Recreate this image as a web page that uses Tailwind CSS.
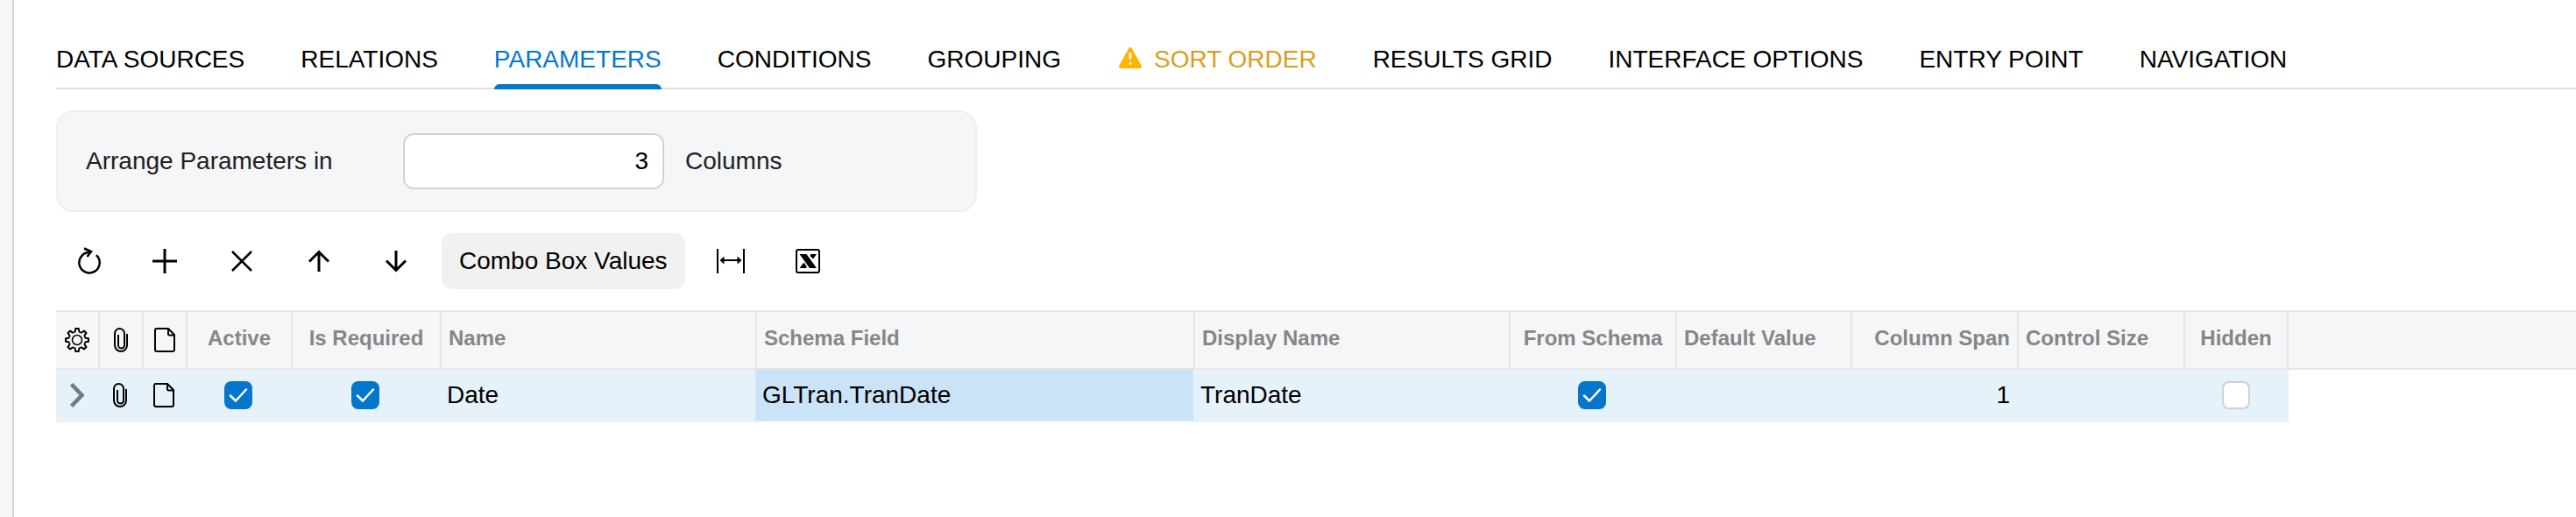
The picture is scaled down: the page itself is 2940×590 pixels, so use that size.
<!DOCTYPE html>
<html lang="en">
<head>
  <meta charset="UTF-8" />
  <meta name="viewport" content="width=device-width, initial-scale=1.0" />
  <title>Generic Inquiry | Parameters</title>
  <script src="https://cdn.jsdelivr.net/npm/@tailwindcss/browser@4"></script>
</head>
<body class="bg-[#f5f6f8] pl-3.5 font-['Liberation_Sans',Arial,sans-serif] text-[28px] leading-8 text-black">

  <!-- Shared icons -->
  <svg class="hidden">
    <symbol id="icon-clip" viewBox="0 0 16 28">
      <path d="M15 7v13a7 7 0 0 1-14 0V6.500a5.500 5.500 0 0 1 11 0V20a3.500 3.500 0 0 1-7 0V8" fill="none" stroke="currentColor" stroke-width="2" />
    </symbol>
    <symbol id="icon-note" viewBox="0 0 24 28">
      <path d="M16 1H3a2 2 0 0 0-2 2v22a2 2 0 0 0 2 2h18a2 2 0 0 0 2-2V8L16 1v6a1.500 1.500 0 0 0 1.500 1.500H23" fill="none" stroke="currentColor" stroke-width="2" stroke-linejoin="round" />
    </symbol>
    <symbol id="icon-check" viewBox="0 0 32 32">
      <path d="M7 16.500l6 6L25 9.500" fill="none" stroke="currentColor" stroke-width="2.500" stroke-linecap="round" stroke-linejoin="round" />
    </symbol>
  </svg>

  <main class="min-h-screen border-l-2 border-[#d0d4d8] bg-white pl-12">

    <!-- Tabs -->
    <nav class="flex h-[102px] items-end gap-16 border-b-2 border-[#e0e0e0] whitespace-nowrap">
      <a href="#" class="h-12">DATA SOURCES</a>
      <a href="#" class="h-12">RELATIONS</a>
      <a href="#" aria-current="page" class="-mb-0.5 flex h-[50px] flex-col justify-between text-[#0477cc]">
        PARAMETERS
        <span class="h-1.5 rounded-t-lg bg-[#0477cc]"></span>
      </a>
      <a href="#" class="h-12">CONDITIONS</a>
      <a href="#" class="h-12">GROUPING</a>
      <a href="#" class="flex h-12 gap-3 text-[#d99e1b]">
        <svg class="h-8 w-[30px]" viewBox="0 0 30 32">
          <path d="M15 4L26 24H4z" fill="#ffb400" stroke="#ffb400" stroke-width="4" stroke-linejoin="round" />
          <path d="M15 9.500v4.500M15 20v.5" stroke="#fff" stroke-width="3" stroke-linecap="round" />
        </svg>
        SORT ORDER
      </a>
      <a href="#" class="h-12">RESULTS GRID</a>
      <a href="#" class="h-12">INTERFACE OPTIONS</a>
      <a href="#" class="h-12">ENTRY POINT</a>
      <a href="#" class="h-12">NAVIGATION</a>
    </nav>

    <!-- Layout settings -->
    <section class="mt-6 flex w-full max-w-[1051px] items-center rounded-[20px] border-2 border-[#eeeff0] bg-[#f5f6f8] px-8 py-6 text-[#1f2024]">
      <label for="columns" class="w-[362px]">Arrange Parameters in</label>
      <input id="columns" type="text" inputmode="numeric" value="3" class="h-16 w-[298px] rounded-xl border-2 border-[#d0d4d8] bg-white px-4 text-right text-black" />
      <label for="columns" class="ml-6">Columns</label>
    </section>

    <!-- Toolbar -->
    <div class="my-6 flex items-center gap-4">
      <button type="button" aria-label="Refresh" class="grid h-16 w-[72px] place-items-center">
        <svg class="size-8" viewBox="0 0 32 32" fill="none" stroke="currentColor" stroke-width="2.500">
          <path d="M26 9.200A11.700 11.700 0 1 1 19 6.100" />
          <path d="M12 1.500l8 3.500-4.500 6" />
        </svg>
      </button>
      <button type="button" aria-label="Add row" class="grid h-16 w-[72px] place-items-center">
        <svg class="size-8" viewBox="0 0 32 32" fill="none" stroke="currentColor" stroke-width="3">
          <path d="M16 2v28M2 16h28" />
        </svg>
      </button>
      <button type="button" aria-label="Delete row" class="grid h-16 w-[72px] place-items-center">
        <svg class="size-8" viewBox="0 0 32 32" fill="none" stroke="currentColor" stroke-width="2.500">
          <path d="M5 5l22 22M27 5L5 27" />
        </svg>
      </button>
      <button type="button" aria-label="Move up" class="grid h-16 w-[72px] place-items-center">
        <svg class="size-8" viewBox="0 0 32 32" fill="none" stroke="currentColor" stroke-width="3">
          <path d="M16 28V6M5 16.500L16 5.500l11 11" />
        </svg>
      </button>
      <button type="button" aria-label="Move down" class="grid h-16 w-[72px] place-items-center">
        <svg class="size-8" viewBox="0 0 32 32" fill="none" stroke="currentColor" stroke-width="3">
          <path d="M16 4v22M5 15.500l11 11 11-11" />
        </svg>
      </button>
      <button type="button" class="h-16 rounded-xl bg-[#f1f1f1] px-5">Combo Box Values</button>
      <button type="button" aria-label="Fit to screen" class="grid h-16 w-[72px] place-items-center">
        <svg class="size-8" viewBox="0 0 32 32" stroke="currentColor" stroke-width="2">
          <path d="M1 2v28M31 2v28M7 15h18" />
          <path d="M3.500 15l5-4.500v9zM28.500 15l-5-4.500v9z" fill="currentColor" stroke="none" />
        </svg>
      </button>
      <button type="button" aria-label="Export to Excel" class="grid h-16 w-[72px] place-items-center">
        <svg class="size-8" viewBox="0 0 32 32">
          <rect x="3" y="3" width="26" height="26" rx="2" fill="none" stroke="currentColor" stroke-width="2" />
          <path d="M6.500 8h8L26 24h-8zM19.500 8H26l-4 5.500-3.500-3.500zM6.500 24l5-6.500L14.500 22v2z" fill="currentColor" />
        </svg>
      </button>
    </div>

    <!-- Parameters grid -->
    <table class="w-full table-fixed border-separate border-spacing-0">
      <colgroup>
        <col class="w-12" />
        <col class="w-[50px]" />
        <col class="w-[50px]" />
        <col class="w-[120px]" />
        <col class="w-[170px]" />
        <col class="w-[360px]" />
        <col class="w-[500px]" />
        <col class="w-[360px]" />
        <col class="w-[190px]" />
        <col class="w-[200px]" />
        <col class="w-[190px]" />
        <col class="w-[190px]" />
        <col class="w-[120px]" />
        <col />
      </colgroup>
      <thead class="bg-[#f5f6f8] text-2xl text-[#868686]">
        <tr class="h-[68px] *:border-y-2 *:border-[#e6e6e6] *:whitespace-nowrap">
          <th>
            <svg class="mx-auto size-7 text-black" viewBox="0 0 28 28" fill="none" stroke="currentColor" stroke-width="2" stroke-linejoin="round">
              <path id="tooth" d="M10.360 5.220c.940-.320 1.440-.720 1.540-1.720L12.200 1h3.600l.3 2.500c.1 1 .6 1.400 1.540 1.720" />
              <use href="#tooth" transform="rotate(45 14 14)" />
              <use href="#tooth" transform="rotate(90 14 14)" />
              <use href="#tooth" transform="rotate(135 14 14)" />
              <use href="#tooth" transform="rotate(180 14 14)" />
              <use href="#tooth" transform="rotate(225 14 14)" />
              <use href="#tooth" transform="rotate(270 14 14)" />
              <use href="#tooth" transform="rotate(315 14 14)" />
              <circle cx="14" cy="14" r="5.500" stroke-width="1.500" />
            </svg>
          </th>
          <th class="border-l-2"><svg class="mx-auto h-7 w-4 text-black"><use href="#icon-clip" /></svg></th>
          <th class="border-l-2"><svg class="mx-auto h-7 w-6 text-black"><use href="#icon-note" /></svg></th>
          <th class="border-l-2 pb-1">Active</th>
          <th class="border-l-2 pb-1">Is Required</th>
          <th class="border-l-2 px-2 pb-1 text-left">Name</th>
          <th class="border-l-2 px-2 pb-1 text-left">Schema Field</th>
          <th class="border-l-2 px-2 pb-1 text-left">Display Name</th>
          <th class="border-l-2 pb-1">From Schema</th>
          <th class="border-l-2 px-2 pb-1 text-left">Default Value</th>
          <th class="border-l-2 px-2 pb-1 text-right">Column Span</th>
          <th class="border-l-2 px-2 pb-1 text-left">Control Size</th>
          <th class="border-x-2 pb-1">Hidden</th>
          <th></th>
        </tr>
      </thead>
      <tbody>
        <tr class="h-[60px] *:border-b-2 *:border-[#e5f2fa] *:bg-[#e5f2fa]">
          <td>
            <svg class="mx-auto h-7 w-4 text-[#757a82]" viewBox="0 0 16 28"><path d="M1.500 1.500L13.500 14l-12 12.500" fill="none" stroke="currentColor" stroke-width="4.500" /></svg>
          </td>
          <td><svg class="mx-auto h-7 w-4"><use href="#icon-clip" /></svg></td>
          <td><svg class="mx-auto h-7 w-6"><use href="#icon-note" /></svg></td>
          <td>
            <div class="grid place-items-center">
              <input type="checkbox" checked aria-label="Active" class="col-start-1 row-start-1 size-8 appearance-none rounded-lg border-2 border-[#d0d0d0] bg-white checked:border-[#0477cc] checked:bg-[#0477cc]" />
              <svg class="pointer-events-none col-start-1 row-start-1 size-8 text-white"><use href="#icon-check" /></svg>
            </div>
          </td>
          <td>
            <div class="grid place-items-center">
              <input type="checkbox" checked aria-label="Is Required" class="col-start-1 row-start-1 size-8 appearance-none rounded-lg border-2 border-[#d0d0d0] bg-white checked:border-[#0477cc] checked:bg-[#0477cc]" />
              <svg class="pointer-events-none col-start-1 row-start-1 size-8 text-white"><use href="#icon-check" /></svg>
            </div>
          </td>
          <td class="px-2">Date</td>
          <td class="!bg-[#cbe3f6] bg-clip-padding px-2">GLTran.TranDate</td>
          <td class="px-2">TranDate</td>
          <td>
            <div class="grid place-items-center">
              <input type="checkbox" checked aria-label="From Schema" class="col-start-1 row-start-1 size-8 appearance-none rounded-lg border-2 border-[#d0d0d0] bg-white checked:border-[#0477cc] checked:bg-[#0477cc]" />
              <svg class="pointer-events-none col-start-1 row-start-1 size-8 text-white"><use href="#icon-check" /></svg>
            </div>
          </td>
          <td></td>
          <td class="px-2 text-right">1</td>
          <td></td>
          <td>
            <div class="grid place-items-center">
              <input type="checkbox" aria-label="Hidden" class="size-8 appearance-none rounded-lg border-2 border-[#d0d0d0] bg-white checked:border-[#0477cc] checked:bg-[#0477cc]" />
            </div>
          </td>
          <td class="!border-transparent !bg-transparent"></td>
        </tr>
      </tbody>
    </table>
  </main>

</body>
</html>
